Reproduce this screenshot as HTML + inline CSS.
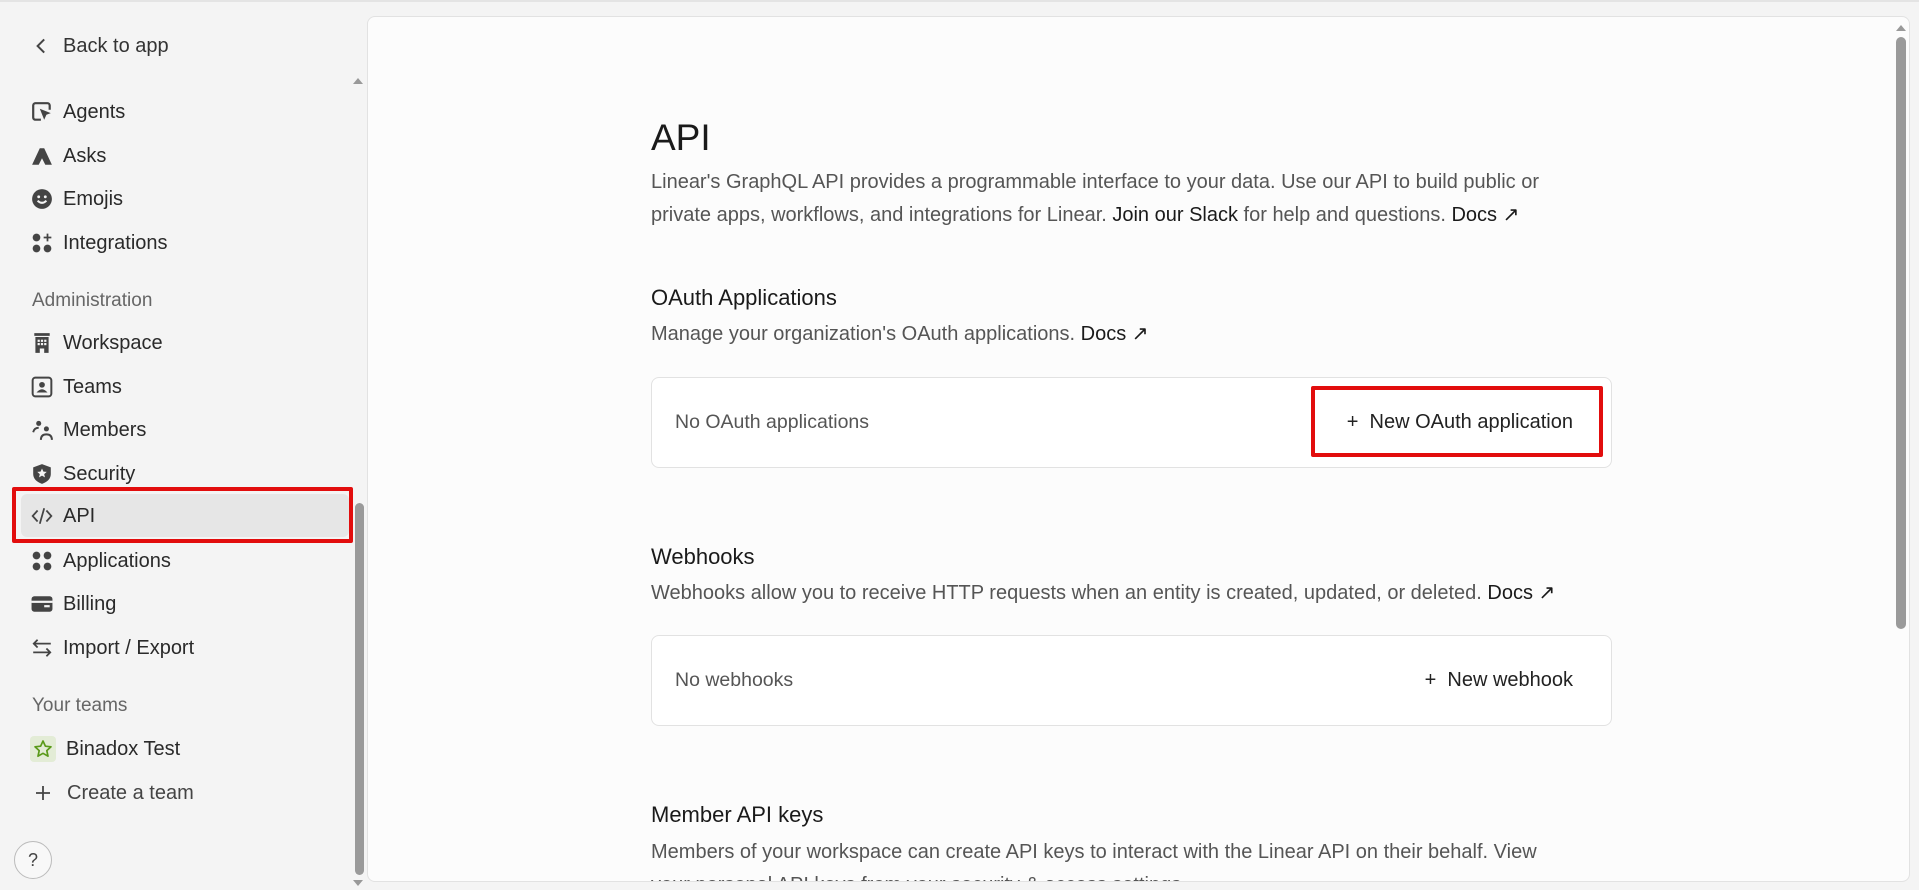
<!DOCTYPE html>
<html><head><meta charset="utf-8">
<style>
*{box-sizing:border-box;margin:0;padding:0}
html,body{width:1919px;height:890px;overflow:hidden;background:#f4f4f4;font-family:"Liberation Sans",sans-serif;color:#222}
.side{position:absolute;left:0;top:0;width:366px;height:890px}
.topline{position:absolute;left:0;top:0;width:1919px;height:2px;background:#e4e4e4}
.item{position:absolute;left:31px;height:30px;display:flex;align-items:center;font-size:20px;color:#2a2a2a}
.item svg{width:22px;height:22px;margin-right:10px;flex:none}
.sec{position:absolute;left:32px;font-size:19px;color:#666}
.hl{position:absolute;left:21px;top:494px;width:328px;height:43px;background:#e6e6e6;border-radius:6px}
.red{position:absolute;border:4px solid #e20d0d;border-radius:2px}
.sb{position:absolute;left:355px;top:503px;width:9px;height:372px;background:#9a9a9a;border-radius:5px}
.main{position:absolute;left:367px;top:16px;width:1543px;height:866px;background:#fcfcfc;border:1px solid #e2e2e2;border-radius:8px;overflow:hidden}
.msb{position:absolute;left:1528px;top:20px;width:10px;height:592px;background:#9a9a9a;border-radius:5px}
.c{position:absolute;left:283px}
h1{font-size:37px;font-weight:400;color:#1a1a1a;line-height:1}
.p{font-size:20px;color:#555;line-height:33px;white-space:nowrap}
.p b{font-weight:400;color:#1a1a1a}
h2{font-size:22px;font-weight:400;color:#1a1a1a}
.card{position:absolute;left:283px;width:961px;height:91px;background:#fff;border:1px solid #e2e2e2;border-radius:8px}
.card .l{position:absolute;left:23px;top:33px;font-size:19.5px;color:#555}
.card .r{position:absolute;right:38px;top:33px;font-size:20px;color:#222}
</style></head><body>
<div class="topline"></div>
<div class="side">
  <div class="item" style="top:31px"><svg viewBox="0 0 20 20"><path d="M12 4l-6 6 6 6" fill="none" stroke="#444" stroke-width="1.8"/></svg><span style="color:#333">Back to app</span></div>
  <div class="item" style="top:97px"><svg viewBox="0 0 20 20"><path d="M9 17H4a2 2 0 0 1-2-2V4a2 2 0 0 1 2-2h11a2 2 0 0 1 2 2v4" fill="none" stroke="#444" stroke-width="2"/><path d="M8 7l10 4-4 1.5-2 4.5z" fill="#444"/></svg>Agents</div>
  <div class="item" style="top:141px"><svg viewBox="0 0 20 20"><path d="M1 18L8 3h4l7 15h-6l-3-6-3 6z" fill="#444"/></svg>Asks</div>
  <div class="item" style="top:184px"><svg viewBox="0 0 20 20"><circle cx="10" cy="10" r="9" fill="#444"/><circle cx="7" cy="8" r="1.3" fill="#f4f4f4"/><circle cx="13" cy="8" r="1.3" fill="#f4f4f4"/><path d="M6 11.5q4 4 8 0" fill="none" stroke="#f4f4f4" stroke-width="1.8"/></svg>Emojis</div>
  <div class="item" style="top:228px"><svg viewBox="0 0 20 20"><circle cx="5" cy="5" r="3.5" fill="#444"/><circle cx="5" cy="15" r="3.5" fill="#444"/><circle cx="15" cy="15" r="3.5" fill="#444"/><path d="M15 1.5v7M11.5 5h7" stroke="#444" stroke-width="1.6"/></svg>Integrations</div>
  <div class="sec" style="top:290px">Administration</div>
  <div class="item" style="top:328px"><svg viewBox="0 0 20 20"><path d="M3 1h14v2.5H3z M4 4.5h12V19h-4v-4H8v4H4z" fill="#444"/><rect x="6" y="7" width="2" height="2" fill="#f4f4f4"/><rect x="9" y="7" width="2" height="2" fill="#f4f4f4"/><rect x="12" y="7" width="2" height="2" fill="#f4f4f4"/><rect x="6" y="10" width="2" height="2" fill="#f4f4f4"/><rect x="9" y="10" width="2" height="2" fill="#f4f4f4"/><rect x="12" y="10" width="2" height="2" fill="#f4f4f4"/></svg>Workspace</div>
  <div class="item" style="top:372px"><svg viewBox="0 0 20 20"><rect x="1.5" y="1.5" width="17" height="17" rx="2.5" fill="none" stroke="#444" stroke-width="1.8"/><circle cx="10" cy="8" r="2.6" fill="#444"/><path d="M5 15q5-6 10 0z" fill="#444"/></svg>Teams</div>
  <div class="item" style="top:415px"><svg viewBox="0 0 20 20"><circle cx="7" cy="4" r="2.3" fill="#444"/><circle cx="14" cy="9" r="2.3" fill="#444"/><path d="M2 12q1-4 5-4M9 19q0-5 5-5t5 5" fill="none" stroke="#444" stroke-width="1.8"/></svg>Members</div>
  <div class="item" style="top:459px"><svg viewBox="0 0 20 20"><path d="M10 1l8 3v6q0 6-8 9q-8-3-8-9V4z" fill="#444"/><path d="M10 5l1.3 2.8 3 .3-2.3 2 .7 3-2.7-1.6-2.7 1.6.7-3-2.3-2 3-.3z" fill="#f4f4f4"/></svg>Security</div>
  <div class="hl"></div>
  <div class="red" style="left:12px;top:487px;width:341px;height:56px"></div>
  <div class="item" style="top:501px"><svg viewBox="0 0 20 20"><path d="M6 5l-4.5 5 4.5 5M14 5l4.5 5-4.5 5M12 3L8 17" fill="none" stroke="#444" stroke-width="1.6"/></svg>API</div>
  <div class="item" style="top:546px"><svg viewBox="0 0 20 20"><circle cx="5" cy="5" r="3.5" fill="#444"/><circle cx="15" cy="5" r="3.5" fill="#444"/><circle cx="5" cy="15" r="3.5" fill="#444"/><circle cx="15" cy="15" r="3.5" fill="#444"/></svg>Applications</div>
  <div class="item" style="top:589px"><svg viewBox="0 0 20 20"><rect x="0.5" y="3" width="19" height="14" rx="2.5" fill="#444"/><rect x="0.5" y="7" width="19" height="2" fill="#f4f4f4"/><rect x="12" y="11" width="5" height="2" fill="#f4f4f4"/></svg>Billing</div>
  <div class="item" style="top:633px"><svg viewBox="0 0 20 20"><path d="M18 6H3M6 2.5L2.5 6 6 9.5M2 14h15M14 10.5l3.5 3.5-3.5 3.5" fill="none" stroke="#444" stroke-width="1.6"/></svg>Import / Export</div>
  <div class="sec" style="top:695px">Your teams</div>
  <div class="item" style="top:734px"><div style="width:26px;height:26px;background:#e3ecd6;border-radius:4px;display:flex;align-items:center;justify-content:center;margin-right:10px;margin-left:-1px"><svg viewBox="0 0 20 20" style="margin:0;width:20px;height:20px"><path d="M10 2l2.4 5.2 5.6.6-4.2 3.8 1.2 5.6L10 14.3l-5 2.9 1.2-5.6L2 7.8l5.6-.6z" fill="none" stroke="#5a9a1a" stroke-width="1.7" stroke-linejoin="round"/></svg></div>Binadox Test</div>
  <div class="item" style="top:778px;color:#444"><svg viewBox="0 0 20 20" style="margin-left:2px;margin-right:14px;width:20px;height:20px"><path d="M10 3v14M3 10h14" stroke="#444" stroke-width="1.8"/></svg>Create a team</div>
  <div style="position:absolute;left:14px;top:841px;width:38px;height:38px;border:1.5px solid #bbb;border-radius:50%;display:flex;align-items:center;justify-content:center;font-size:18px;color:#444;background:#f8f8f8">?</div>
  <div class="sb"></div>
  <div style="position:absolute;left:353px;top:78px;width:0;height:0;border:5px solid transparent;border-bottom:6px solid #999;border-top:0"></div>
  <div style="position:absolute;left:353px;top:880px;width:0;height:0;border:5px solid transparent;border-top:6px solid #999;border-bottom:0"></div>
</div>
<div class="main">
  <div class="c" style="top:102px"><h1>API</h1></div>
  <div class="c p" style="top:149px">Linear's GraphQL API provides a programmable interface to your data. Use our API to build public or<br>private apps, workflows, and integrations for Linear. <b>Join our Slack</b> for help and questions. <b>Docs ↗</b></div>
  <div class="c" style="top:268px"><h2>OAuth Applications</h2></div>
  <div class="c p" style="top:301px">Manage your organization's OAuth applications. <b>Docs ↗</b></div>
  <div class="card" style="top:360px"><div class="l">No OAuth applications</div><div class="r">+&nbsp; New OAuth application</div></div>
  <div class="red" style="left:943px;top:369px;width:292px;height:71px"></div>
  <div class="c" style="top:527px"><h2>Webhooks</h2></div>
  <div class="c p" style="top:560px">Webhooks allow you to receive HTTP requests when an entity is created, updated, or deleted. <b>Docs ↗</b></div>
  <div class="card" style="top:618px"><div class="l">No webhooks</div><div class="r">+&nbsp; New webhook</div></div>
  <div class="c" style="top:785px"><h2>Member API keys</h2></div>
  <div class="c p" style="top:819px">Members of your workspace can create API keys to interact with the Linear API on their behalf. View<br>your personal API keys from your security &amp; access settings.</div>
  <div class="msb"></div>
  <div style="position:absolute;left:1528px;top:8px;width:0;height:0;border:5px solid transparent;border-bottom:6px solid #999;border-top:0"></div>
</div>
</body></html>
